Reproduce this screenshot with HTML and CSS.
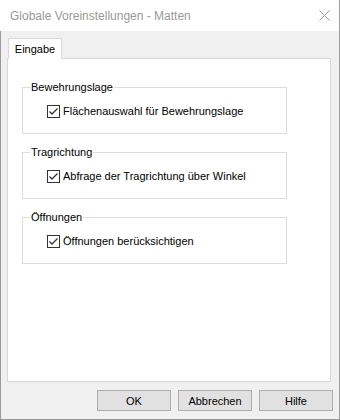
FILE: index.html
```html
<!DOCTYPE html>
<html lang="de">
<head>
    <meta charset="UTF-8">
    <title>Globale Voreinstellungen - Matten</title>
    <link rel="stylesheet" href="styles.css">
</head>
<body>
    <div class="window">
        <div class="titlebar">
            <span class="title">Globale Voreinstellungen - Matten</span>
            <svg class="close" width="11" height="11" viewBox="0 0 11 11">
                <path d="M0.5 0.5 L10.5 10.5 M10.5 0.5 L0.5 10.5" stroke="#999" stroke-width="1" fill="none"/>
            </svg>
        </div>
        <div class="client">
            <div class="tabs">
                <div class="tab">Eingabe</div>
            </div>
            <div class="panel">
                <fieldset class="group">
                    <legend>Bewehrungslage</legend>
                    <label class="check">
                        <span class="box"><svg width="11" height="11" viewBox="0 0 11 11"><path d="M1.5 5.5 L4 8 L9.5 2.5" stroke="#333" stroke-width="1.3" fill="none"/></svg></span>
                        Flächenauswahl für Bewehrungslage
                    </label>
                </fieldset>
                <fieldset class="group">
                    <legend>Tragrichtung</legend>
                    <label class="check">
                        <span class="box"><svg width="11" height="11" viewBox="0 0 11 11"><path d="M1.5 5.5 L4 8 L9.5 2.5" stroke="#333" stroke-width="1.3" fill="none"/></svg></span>
                        Abfrage der Tragrichtung über Winkel
                    </label>
                </fieldset>
                <fieldset class="group">
                    <legend>Öffnungen</legend>
                    <label class="check">
                        <span class="box"><svg width="11" height="11" viewBox="0 0 11 11"><path d="M1.5 5.5 L4 8 L9.5 2.5" stroke="#333" stroke-width="1.3" fill="none"/></svg></span>
                        Öffnungen berücksichtigen
                    </label>
                </fieldset>
            </div>
            <div class="buttons">
                <button>OK</button>
                <button>Abbrechen</button>
                <button>Hilfe</button>
            </div>
        </div>
    </div>
</body>
</html>
```

FILE: styles.css
```css
* {
    box-sizing: border-box;
}
body {
    margin: 0;
    font-family: "Liberation Sans", Arial, sans-serif;
    font-size: 11px;
    color: #000;
    overflow: hidden;
}
.window {
    width: 340px;
    height: 420px;
    display: flex;
    flex-direction: column;
    background: #fff;
    border-right: 1px solid #9a9a9a;
    border-bottom: 1px solid #9a9a9a;
}
.titlebar {
    height: 31px;
    flex: none;
    display: flex;
    align-items: center;
    justify-content: space-between;
    padding: 0 9px 0 10px;
}
.title {
    font-size: 12px;
    color: #999;
}
.client {
    flex: 1;
    display: flex;
    flex-direction: column;
    background: #f0f0f0;
    border-left: 1px solid #9a9a9a;
    padding: 7px 6px 8px 6px;
}
.tabs {
    display: flex;
    padding-left: 1px;
}
.tab {
    position: relative;
    z-index: 1;
    width: 54px;
    height: 21px;
    margin-bottom: -1px;
    line-height: 20px;
    text-align: center;
    background: #fff;
    border: 1px solid #d9d9d9;
    border-bottom: none;
}
.panel {
    flex: 1;
    display: flex;
    flex-direction: column;
    gap: 11px;
    margin-right: 2px;
    padding: 21px 0 0 14px;
    background: #fff;
    border: 1px solid #d9d9d9;
}
.group {
    width: 265px;
    margin: 0;
    padding: 10px 0 15px 7px;
    border: 1px solid #dcdcdc;
}
.group legend {
    padding: 0 1px;
    line-height: 14px;
}
.check {
    display: flex;
    align-items: center;
    gap: 3px;
    height: 14px;
    margin-left: 17px;
}
.box {
    width: 13px;
    height: 13px;
    display: flex;
    align-items: center;
    justify-content: center;
    background: #fff;
    border: 1px solid #333;
}
.buttons {
    display: flex;
    justify-content: flex-end;
    gap: 7px;
    margin-top: 8px;
}
.buttons button {
    width: 74px;
    height: 21px;
    padding: 0;
    font: inherit;
    color: #000;
    background: #e1e1e1;
    border: 1px solid #adadad;
    border-radius: 0;
}
```
